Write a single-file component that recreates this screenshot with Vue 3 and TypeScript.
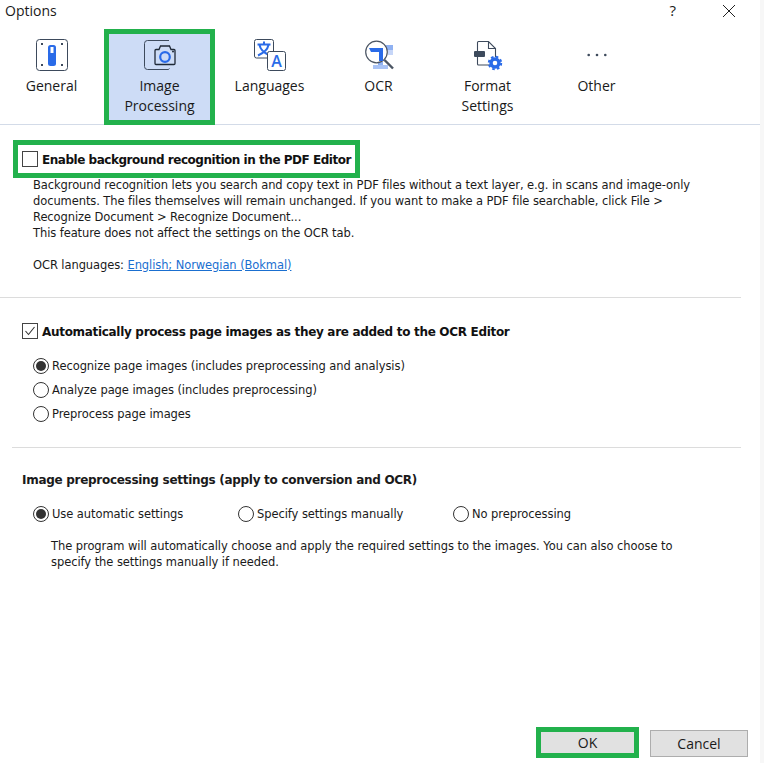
<script setup lang="ts">
const tabs = [
  { id: 'general', label: ['General'], on: false },
  { id: 'image', label: ['Image', 'Processing'], on: true },
  { id: 'lang', label: ['Languages'], on: false },
  { id: 'ocr', label: ['OCR'], on: false },
  { id: 'format', label: ['Format', 'Settings'], on: false },
  { id: 'other', label: ['Other'], on: false },
]
const pageRadios = [
  { text: 'Recognize page images (includes preprocessing and analysis)', on: true },
  { text: 'Analyze page images (includes preprocessing)', on: false },
  { text: 'Preprocess page images', on: false },
]
const prepRadios = [
  { text: 'Use automatic settings', on: true, cls: 'r1' },
  { text: 'Specify settings manually', on: false, cls: 'r2' },
  { text: 'No preprocessing', on: false, cls: 'r3' },
]
</script>

<template>
  <div class="dialog">
    <header class="titlebar">
      <span class="title">Options</span>
      <span class="help">?</span>
      <svg class="close" width="14" height="14" viewBox="0 0 14 14"><path d="M1 1l12 12M13 1L1 13" stroke="#222" stroke-width="1" fill="none" /></svg>
    </header>

    <nav class="tabs">
      <div v-for="t in tabs" :key="t.id" class="tab" :class="[t.id, { on: t.on }]">
        <svg class="ico" width="36" height="36" viewBox="0 0 36 36">
          <template v-if="t.id === 'general'">
            <rect x="2.500" y="2.500" width="31" height="31" rx="3" fill="#fff" stroke="#3d4a5c" />
            <rect x="14" y="8" width="8" height="21" rx="2.500" fill="#2a6be8" />
            <rect x="16.500" y="10" width="3" height="6" fill="#fff" />
            <g fill="#3d4a5c"><rect x="7" y="6" width="2" height="2" /><rect x="27" y="6" width="2" height="2" /><rect x="7" y="27" width="2" height="2" /><rect x="27" y="27" width="2" height="2" /></g>
          </template>
          <template v-else-if="t.id === 'image'">
            <path d="M27 3.500H5.500a3 3 0 0 0-3 3v23a3 3 0 0 0 3 3H26a2 2 0 0 0 1.500-1" fill="none" stroke="#3d4a5c" />
            <path d="M14 12.500h3l1.500-3.500h9l1.500 3.500h3a1 1 0 0 1 1 1v13a1 1 0 0 1-1 1H14a1 1 0 0 1-1-1v-13a1 1 0 0 1 1-1z" fill="#cddcf6" stroke="#1f2937" stroke-width="1.300" />
            <circle cx="23" cy="20" r="4.800" fill="none" stroke="#2a6be8" stroke-width="2.200" />
            <circle cx="31" cy="14.500" r="1" fill="#1f2937" />
          </template>
          <template v-else-if="t.id === 'lang'">
            <rect x="2.500" y="2.500" width="19" height="18.500" rx="2" fill="#fff" stroke="#3d4a5c" />
            <path d="M5.500 7.500h13M12 4.500v3M7.500 8c1 5 5 8 9.500 10M16.500 8c-1 5-5 8-10.500 10.500" stroke="#2a6be8" stroke-width="2" fill="none" />
            <rect x="15.500" y="14.500" width="18" height="19" rx="2" fill="#fff" stroke="#3d4a5c" />
            <text x="24.500" y="30" text-anchor="middle" class="a">A</text>
          </template>
          <template v-else-if="t.id === 'ocr'">
            <rect x="25" y="8" width="7" height="5" fill="#8fb1f2" />
            <rect x="27" y="13" width="5" height="5" fill="#c6d6f8" />
            <rect x="17" y="25" width="5" height="4" fill="#8fb1f2" />
            <rect x="12" y="28" width="15" height="4" fill="#a9c3f5" />
            <circle cx="15.500" cy="15" r="10.800" fill="#fff" stroke="#4b5563" stroke-width="1.200" />
            <path d="M8 11H22V24H18V15H10z" fill="#2a6be8" />
            <path d="M23.500 23l8.500 8.500" stroke="#4b5563" stroke-width="2.400" />
          </template>
          <template v-else-if="t.id === 'format'">
            <path d="M7.500 14V5.500a1 1 0 0 1 1-1H18.500l7 7V20M7.500 20v7a1 1 0 0 0 1 1H20M18.500 4.500v7h7" fill="none" stroke="#3d4a5c" stroke-width="1.100" />
            <rect x="4" y="14" width="11" height="6" rx="1" fill="#3d4a5c" />
            <circle cx="25" cy="26" r="4" fill="none" stroke="#2a6be8" stroke-width="3.400" />
            <circle cx="25" cy="26" r="6.200" fill="none" stroke="#2a6be8" stroke-width="2" stroke-dasharray="2.600 2.270" />
          </template>
          <template v-else>
            <g fill="#3d4a5c"><circle cx="9.700" cy="18" r="1.300" /><circle cx="18" cy="18" r="1.300" /><circle cx="26.300" cy="18" r="1.300" /></g>
          </template>
        </svg>
        <span v-for="l in t.label" :key="l" class="lbl">{{ l }}</span>
      </div>
    </nav>

    <main class="body">
      <section class="s1">
        <label class="check mark">
          <span class="box"></span>
          <b>Enable background recognition in the PDF Editor</b>
        </label>
        <div class="desc">
          <p>Background recognition lets you search and copy text in PDF files without a text layer, e.g. in scans and image-only</p>
          <p>documents. The files themselves will remain unchanged. If you want to make a PDF file searchable, click File &gt;</p>
          <p>Recognize Document &gt; Recognize Document...</p>
          <p>This feature does not affect the settings on the OCR tab.</p>
          <p class="langs">OCR languages: <a>English; Norwegian (Bokmal)</a></p>
        </div>
      </section>

      <section class="s2">
        <label class="check">
          <span class="box">
            <svg width="14" height="14" viewBox="0 0 14 14"><path d="M2.500 7l3 3.500L11.500 3" fill="none" stroke="#333" stroke-width="1.100" /></svg>
          </span>
          <b>Automatically process page images as they are added to the OCR Editor</b>
        </label>
        <div class="radios">
          <div v-for="r in pageRadios" :key="r.text" class="radio">
            <span class="dot" :class="{ on: r.on }"></span>{{ r.text }}
          </div>
        </div>
      </section>

      <section class="s3">
        <b class="head">Image preprocessing settings (apply to conversion and OCR)</b>
        <div class="row">
          <div v-for="r in prepRadios" :key="r.text" class="radio" :class="r.cls">
            <span class="dot" :class="{ on: r.on }"></span>{{ r.text }}
          </div>
        </div>
        <div class="note">
          <p>The program will automatically choose and apply the required settings to the images. You can also choose to</p>
          <p>specify the settings manually if needed.</p>
        </div>
      </section>
    </main>

    <footer class="foot">
      <button class="btn ok">OK</button>
      <button class="btn cancel">Cancel</button>
    </footer>
  </div>
</template>

<style>
html, body { margin: 0; background: #fff; }
</style>

<style scoped>
.dialog {
  width: 764px;
  height: 763px;
  box-sizing: border-box;
  display: flex;
  flex-direction: column;
  background: #fff;
  border-right: 4px solid #f7f7f7;
  overflow: hidden;
  color: #1a1a1a;
  font-family: "DejaVu Sans", sans-serif;
  font-size: 11.5px;
  letter-spacing: -0.07px;
}
p { margin: 0; }
.titlebar {
  height: 28px;
  display: flex;
  align-items: flex-start;
  font-family: "Open Sans", sans-serif;
  font-size: 14px;
  letter-spacing: 0;
  line-height: 22px;
  padding-left: 5px;
}
.title { flex: 1; }
.help { margin-right: 46px; font-size: 15px; line-height: 20px; }
.close { margin-right: 24px; margin-top: 4px; }
.tabs {
  height: 97px;
  display: flex;
  box-sizing: border-box;
  border-bottom: 1px solid #d3dbe8;
  font-family: "Open Sans", sans-serif;
  font-size: 14px;
  letter-spacing: 0;
}
.tab {
  display: flex;
  flex-direction: column;
  align-items: center;
  box-sizing: border-box;
  line-height: 20px;
  padding-top: 9px;
  width: 109px;
}
.tab .ico { margin-bottom: 3px; }
.tab.on {
  background: #cddcf6;
  border: 5px solid #22b14c;
  height: 96px;
  margin-top: 1px;
  padding-top: 3px;
}
.general { margin-left: -3px; }
.image { margin-left: -2px; width: 111px; }
.a { font: 600 16px "Open Sans", sans-serif; fill: #2a6be8; }
.body { flex: 1; display: flex; flex-direction: column; }
.check { display: flex; align-items: center; gap: 4px; }
.check b { color: #111; font-size: 12px; letter-spacing: -0.31px; padding-top: 1px; }
.box {
  width: 14px;
  height: 14px;
  border: 1px solid #444;
  display: flex;
  align-items: center;
  justify-content: center;
  flex: none;
}
.s1 { height: 173px; box-sizing: border-box; padding: 15px 0 0 13px; margin-right: 19px; border-bottom: 1px solid #dcdcdc; }
.mark {
  display: inline-flex;
  height: 38px;
  box-sizing: border-box;
  border: 5px solid #22b14c;
  padding: 0 4px;
  margin-bottom: -1px;
}
.mark b { letter-spacing: -0.47px; }
.desc { padding-left: 20px; line-height: 16px; letter-spacing: -0.09px; }
.langs { margin-top: 16px; }
a { color: #1a6fd0; text-decoration: underline; }
.s2 { height: 150px; box-sizing: border-box; padding: 25px 0 0 10px; margin-left: 12px; margin-right: 19px; border-bottom: 1px solid #dcdcdc; }
.radios { margin-top: 19px; display: flex; flex-direction: column; gap: 8px; padding-left: 11px; }
.radio { display: flex; align-items: center; height: 16px; gap: 3px; }
.dot {
  width: 14px;
  height: 14px;
  border: 1px solid #333;
  border-radius: 50%;
  flex: none;
  position: relative;
}
.dot.on::after {
  content: "";
  position: absolute;
  inset: 2px;
  border-radius: 50%;
  background: #333;
}
.s3 { padding: 25px 0 0 22px; }
.head { font-size: 12px; letter-spacing: -0.29px; display: block; }
.row { display: flex; margin-top: 19px; padding-left: 11px; }
.r1 { width: 205px; }
.r2 { width: 215px; }
.note { margin-top: 16px; padding-left: 29px; line-height: 16px; }
.foot {
  height: 36px;
  display: flex;
  align-items: flex-start;
  gap: 11px;
  padding-left: 536px;
}
.btn {
  font-family: "Open Sans", sans-serif;
  font-size: 14px;
  color: #1a1a1a;
  background: #e1e1e1;
  border: 1px solid #adadad;
  box-sizing: border-box;
  padding: 0;
}
.ok { width: 103px; height: 31px; border: 5px solid #22b14c; }
.cancel { width: 98px; height: 27px; margin-top: 3px; }
</style>
